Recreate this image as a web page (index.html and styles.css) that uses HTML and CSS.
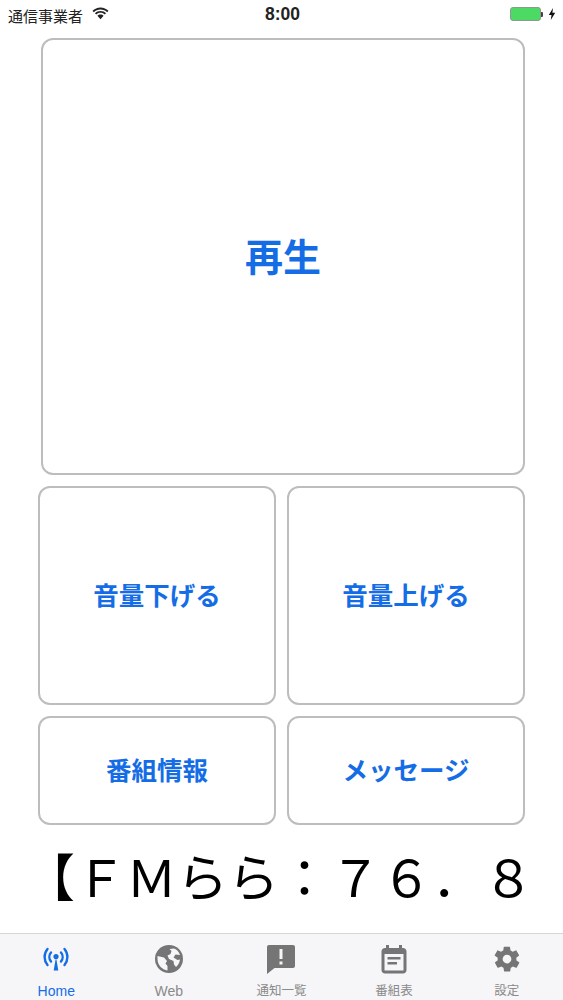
FILE: index.html
```html
<!DOCTYPE html>
<html lang="ja">
	<head>
		<meta charset="utf-8" />
		<title>FMらら</title>
		<link rel="stylesheet" href="styles.css">
	</head>
	<body>
		<div class="status-bar">
			<div class="status-left">
				<span class="carrier">通信事業者</span>
				<svg class="wifi" viewBox="0 0 16 12" width="17" height="13">
					<path d="M8 2.200c2.500 0 4.700 1 6.300 2.600l1.200-1.300C13.600 1.500 11 .3 8 .3S2.400 1.500.5 3.500l1.200 1.300C3.300 3.200 5.500 2.200 8 2.200z" fill="#222"/>
					<path d="M8 5.400c1.600 0 3 .6 4 1.600l1.200-1.300C11.900 4.400 10 3.600 8 3.600S4.100 4.400 2.800 5.700L4 7c1-1 2.400-1.600 4-1.600z" fill="#222"/>
					<path d="M8 7c-1.200 0-2.200.5-2.900 1.200L8 11.500l2.900-3.300C10.200 7.500 9.200 7 8 7z" fill="#222"/>
				</svg>
			</div>
			<div class="clock">8:00</div>
			<div class="status-right">
				<div class="battery"></div>
				<div class="battery-tip"></div>
				<svg class="bolt" viewBox="0 0 8 12" width="8" height="12">
					<path d="M5 0L.8 7h2.700L2.800 12 7.200 4.800H4.400z" fill="#111"/>
				</svg>
			</div>
		</div>

		<div class="buttons">
			<a class="btn btn-play">再生</a>
			<div class="btn-row btn-row-volume">
				<a class="btn">音量下げる</a>
				<a class="btn">音量上げる</a>
			</div>
			<div class="btn-row btn-row-info">
				<a class="btn">番組情報</a>
				<a class="btn">メッセージ</a>
			</div>
		</div>

		<div class="ticker">【&#xFF26;&#xFF2D;らら&#xFF1A;&#xFF17;&#xFF16;&#xFF0E;&#xFF18;</div>

		<div class="tab-bar">
			<div class="tab active">
				<svg viewBox="0 0 30 30" width="30" height="30" fill="none" stroke="#156de6" stroke-width="2.400" stroke-linecap="round">
					<circle cx="15" cy="12.500" r="2.600" fill="#156de6" stroke="none"/>
					<path d="M15 13l-2.300 13.500h4.600z" fill="#156de6" stroke="none"/>
					<path d="M10 8.500a7 7 0 0 0 0 9"/>
					<path d="M20 8.500a7 7 0 0 1 0 9"/>
					<path d="M6.500 5a12.500 12.500 0 0 0 0 16"/>
					<path d="M23.500 5a12.500 12.500 0 0 1 0 16"/>
				</svg>
				<span class="tab-latin">Home</span>
			</div>
			<div class="tab">
				<svg viewBox="0 0 30 30" width="30" height="30">
					<circle cx="15" cy="15" r="14" fill="#757575"/>
					<path d="M3.500 12l6.500 1.500 3 3.500-1.500 2.500 2 2.500v4.500C8 25.500 3.500 21 3.500 15c0-1 0-2 0-3zM20 4.500c3 1.200 5.200 3.500 6 6.500l-4.500-.5-2 3 4 2.500 2.500-.5c-.4 3-1.800 5.500-4 7.500l-2-2.500-.5-3.500-4.500-2-1.500-3.500 3-1.500 1-3-2-2z" fill="#f6f6f8"/>
				</svg>
				<span class="tab-latin">Web</span>
			</div>
			<div class="tab">
				<svg viewBox="0 0 30 30" width="30" height="30">
					<path d="M3 1h24c1.200 0 2 .8 2 2v19c0 1.200-.8 2-2 2H8.500L1 30V3c0-1.200.8-2 2-2z" fill="#757575"/>
					<path d="M13.500 5h3v10h-3zM13.500 17.500h3v3h-3z" fill="#f6f6f8"/>
				</svg>
				<span>通知一覧</span>
			</div>
			<div class="tab">
				<svg viewBox="0 0 30 30" width="30" height="30">
					<path d="M7 1h3v3h10V1h3v3h1c2 0 3.500 1.500 3.500 3.500V26c0 2-1.500 3.500-3.500 3.500H6C4 29.500 2.500 28 2.500 26V7.500C2.500 5.500 4 4 6 4h1z" fill="#757575"/>
					<path d="M5.500 10h19v16.500h-19z" fill="#f6f6f8"/>
					<path d="M8.500 13h13v2.400h-13zM8.500 18h9.500v2.400H8.500z" fill="#757575"/>
				</svg>
				<span>番組表</span>
			</div>
			<div class="tab">
				<svg viewBox="0 0 24 24" width="30" height="30">
					<path d="M19.400 13c.1-.3.100-.7.100-1s0-.7-.1-1l2.100-1.600c.2-.2.200-.4.100-.6l-2-3.500c-.1-.2-.4-.3-.6-.2l-2.500 1c-.5-.4-1.100-.7-1.700-1l-.4-2.600c0-.3-.2-.4-.5-.4h-4c-.3 0-.5.100-.5.400l-.4 2.600c-.6.300-1.200.6-1.700 1l-2.500-1c-.2-.1-.5 0-.6.200l-2 3.500c-.1.200-.1.400.1.600L4.600 11c-.1.300-.1.700-.1 1s0 .7.100 1l-2.100 1.600c-.2.200-.2.400-.1.600l2 3.500c.1.200.4.300.6.200l2.500-1c.5.400 1.100.7 1.700 1l.4 2.600c0 .3.200.4.500.4h4c.3 0 .5-.1.500-.4l.4-2.600c.6-.3 1.200-.6 1.700-1l2.500 1c.2.100.5 0 .6-.2l2-3.500c.1-.2.100-.4-.1-.6zM12 15.500a3.500 3.500 0 1 1 0-7 3.500 3.500 0 0 1 0 7z" fill="#757575"/>
				</svg>
				<span>設定</span>
			</div>
		</div>
	</body>
</html>
```

FILE: styles.css
```css
html, body {
	margin: 0;
	padding: 0;
}
body {
	width: 563px;
	height: 1000px;
	background-color: #fff;
	font-family: "Liberation Sans", "Noto Sans CJK JP", sans-serif;
	display: flex;
	flex-direction: column;
	overflow: hidden;
}
.status-bar {
	height: 38px;
	flex: none;
	padding: 5px 7px 0 8px;
	box-sizing: border-box;
	display: flex;
	align-items: flex-start;
	justify-content: space-between;
	position: relative;
}
.status-left {
	display: flex;
	align-items: center;
	gap: 9px;
	height: 20px;
}
.carrier {
	font-size: 15px;
	color: #222;
}
.wifi {
	margin-top: -3px;
}
.clock {
	position: absolute;
	left: 2px;
	right: 0;
	top: 4px;
	line-height: 20px;
	text-align: center;
	font-size: 17.500px;
	font-weight: 700;
	color: #222;
}
.status-right {
	display: flex;
	align-items: center;
	height: 18px;
}
.battery {
	width: 31px;
	height: 14px;
	border-radius: 3px;
	background-color: #4cd964;
	border: 1px solid #8a9a8c;
	box-sizing: border-box;
}
.battery-tip {
	width: 2px;
	height: 5px;
	background-color: #444;
	border-radius: 0 1px 1px 0;
	margin-right: 5px;
}
.buttons {
	flex: none;
	width: 487px;
	margin-left: 38px;
	display: flex;
	flex-direction: column;
	gap: 11px;
}
.btn {
	display: flex;
	align-items: center;
	justify-content: center;
	flex: 1;
	box-sizing: border-box;
	border: 2px solid #bdbdbd;
	border-radius: 12px;
	background-color: #fff;
	color: #156de6;
	font-size: 25.500px;
	font-weight: 700;
	padding-bottom: 4px;
}
.btn-play {
	flex: none;
	height: 437px;
	margin-left: 3px;
	font-size: 38px;
}
.btn-row {
	display: flex;
	gap: 11px;
}
.btn-row-volume {
	height: 219px;
}
.btn-row-info {
	height: 109px;
}
.ticker {
	flex: none;
	margin-top: 29px;
	height: 51px;
	line-height: 51px;
	font-size: 51px;
	font-weight: 400;
	color: #000;
	white-space: nowrap;
	padding-left: 24px;
}
.tab-bar {
	margin-top: auto;
	height: 67px;
	box-sizing: border-box;
	border-top: 1px solid #d6d6d8;
	background-color: #f6f6f8;
	display: flex;
	padding: 10px 0 0;
}
.tab {
	flex: 1;
	display: flex;
	flex-direction: column;
	align-items: center;
	gap: 9px;
	font-size: 12.500px;
	color: #8a8a8a;
}
.tab span {
	line-height: 16px;
}
.tab .tab-latin {
	font-size: 14px;
}
.tab.active {
	color: #156de6;
}
```
